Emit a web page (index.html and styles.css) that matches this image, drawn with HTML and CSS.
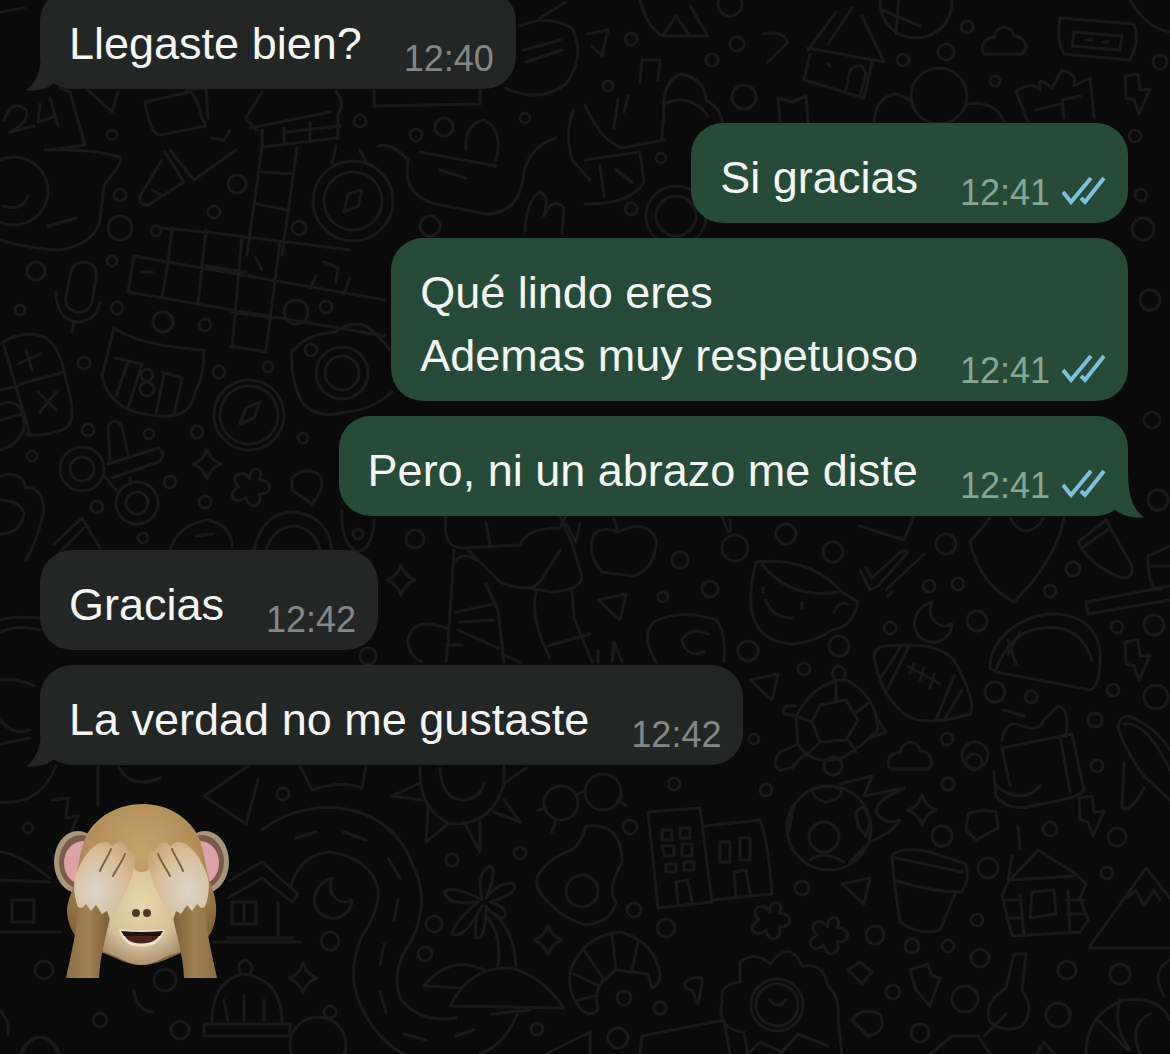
FILE: index.html
```html
<!DOCTYPE html>
<html lang="es">
<head>
  <meta charset="UTF-8">
  <meta name="viewport" content="width=device-width, initial-scale=1.0">
  <title>Chat</title>
  <link rel="stylesheet" href="styles.css">
</head>
<body>
  <!-- wallpaper -->
  <svg class="wallpaper" viewBox="0 0 1170 1054" preserveAspectRatio="xMinYMin slice" aria-hidden="true">
    <defs>
      <path id="star" d="M0-15Q3-4 14 0Q4 3 0 15Q-4 4-14 0Q-4-3 0-15Z"/>
      <path id="bolt" d="M-9-18L4-20L6-4L16-5L5 20L0 6L-8 4Z"/>
      <path id="flower" d="M0-8C-2-22 16-20 9-7C22-8 24 8 9 7C14 20-2 24-4 10C-16 20-24 6-11 0C-22-10-8-20 0-8Z"/>
      <path id="moon" d="M0-20C-22-14-24 16-2 20C10 22 20 12 20 2C8 8-6-2 0-20Z"/>
      <path id="cloud" d="M-20 12C-26 0-14-6-10-4C-8-18 8-18 10-6C20-6 26 6 18 12Z"/>
      <path id="tri" d="M-14-6L14-12L8 14Z"/>
    </defs>

    <!-- top left -->
    <path d="M60 88L70 92L85 145L50 150M4 120Q12 98 26 110Q30 122 10 132L34 126M40 104L38 122L56 116M50 98L58 126M88 90L112 112L118 92M0 12L24 8"/>
    <path d="M145 102L190 92Q196 94 202 118L206 126L160 135Q150 134 145 102ZM186 90L206 88L208 118"/>
    <path d="M0 160A34 34 0 1 1 0 222M4 206Q22 212 28 196M45 150Q90 148 120 157Q124 162 104 185L100 220Q95 244 60 250Q34 250 0 240M48 226L76 218"/>
    <path d="M165 152L184 182L148 205Q138 206 140 196L162 160M170 150L194 180L236 150M212 138L224 140L230 130M152 190L162 196"/>
    <path d="M250 128L330 112M262 92L246 118L256 130M336 92Q346 104 338 114V138L262 147V130M284 128V144M310 122V142M286 132L340 126M262 147L247 255M297 148L282 255M262 172L294 174M256 204L288 210"/>
    <circle cx="353" cy="201" r="40"/><circle cx="353" cy="201" r="29"/>
    <path d="M344 212L348 194L362 190L358 206ZM332 163L336 146M366 162L360 150"/>
    <path d="M378 146Q392 142 408 160Q402 196 436 204L486 214Q520 214 524 172Q530 146 556 138M420 152L496 166M466 150Q464 124 484 120Q504 130 496 160M440 170L466 178M374 90V106L480 104V88"/>
    <path d="M525 232Q526 200 540 192Q550 196 544 216Q552 196 564 208L562 234M574 110Q564 130 572 160L590 180M505 88Q540 104 566 84Q586 56 572 28Q548 14 520 26M524 50L560 40M526 62L562 50M540 18L566 2"/>

    <!-- top right -->
    <path d="M640 0Q648 30 664 36L708 36L690 6M664 34L676 16L690 36M808 50L836 12M828 44L852 8M808 48L884 62L862 16M810 54L804 80L864 98L872 62M846 90L850 70Q862 60 866 74L860 96"/>
    <circle cx="916" cy="2" r="36"/><path d="M900-20L896 34M882 10L920 26M830 66L828 64"/>
    <use href="#cloud" x="1004" y="42"/>
    <path d="M1060 18L1134 24Q1140 40 1130 60L1064 54Q1056 40 1060 18ZM1074 32L1122 36L1120 50L1072 46ZM1086 40H1092M1102 42H1108"/>
    <path d="M588 34L608 30L602 56L592 46M764 34Q782 30 788 42L768 62M640 82L642 60L660 60L658 80M624 112L628 96M614 128L618 100M1130 0Q1146 28 1170 32"/>
    <path d="M664 122Q660 80 682 74Q706 80 706 100Q722 110 722 122M662 140L664 104Q690 92 708 116M585 105Q600 140 622 148L664 140M585 160L640 152L644 182Q630 205 585 204M600 165L604 196M616 170L632 182"/>
    <circle cx="939" cy="96" r="28"/><path d="M874 122Q876 96 896 94Q912 98 914 108M966 104Q996 100 1004 122M780 122L778 98L792 102L806 96L808 122"/>
    <path d="M1028 122L1016 92Q1030 80 1040 90Q1036 74 1052 88L1062 70Q1078 74 1074 86L1090 78L1094 118M1036 110L1060 104M1064 118L1062 100L1080 96"/>
    <use href="#bolt" x="1134" y="94"/>
    <circle cx="676" cy="216" r="30"/><circle cx="676" cy="216" r="20"/>

    <!-- grid of letter tiles and things beside it -->
    <path d="M134 256L385 300M128 292L385 336M134 256L128 292M168 262L162 298M206 230L198 304M242 236L232 348M280 242L266 350M206 232L350 250M172 228L168 262M316 276L310 288M350 278L344 294M162 228L206 232M232 312L272 318M230 346L266 352M206 266L246 272M142 272H152M256 258L262 270M324 262L338 268L336 282"/>
    <path d="M70 276Q72 262 84 262Q98 264 96 278L92 302Q88 314 76 312Q64 308 66 296ZM56 292Q56 318 76 322Q96 322 100 302M74 322L72 332"/>
    <path d="M0 344Q20 330 42 336Q60 344 66 380Q78 420 66 428Q44 438 26 434M4 346L30 434M20 384L64 372M26 350L32 370M18 364L40 354M38 392L56 410M56 392L40 412M0 390L18 386M0 404Q26 396 24 430Q16 446 0 450M0 420L22 414"/>
    <path d="M114 328Q140 346 204 350Q204 376 196 390Q190 420 160 416Q110 414 102 376ZM116 358L142 364L128 408M128 362L116 396M162 372L182 378L174 416M164 374L156 414"/>
    <circle cx="147" cy="375" r="6"/><circle cx="147" cy="389" r="7"/>
    <circle cx="249" cy="415" r="35"/><circle cx="249" cy="415" r="29"/><path d="M240 424L246 408L260 402L254 418Z"/>
    <path d="M294 350Q306 334 336 332Q350 320 366 326Q380 336 390 350M292 350Q290 380 302 402Q316 420 346 412Q372 410 392 392"/>
    <circle cx="342" cy="373" r="26"/><circle cx="342" cy="373" r="17"/><circle cx="311" cy="350" r="6"/>
    <circle cx="82" cy="469" r="22"/><circle cx="82" cy="469" r="12"/><circle cx="137" cy="503" r="21"/><circle cx="137" cy="503" r="11"/>
    <path d="M108 464L158 448Q168 454 158 462L112 478M110 462L108 426Q114 416 122 426L128 456M130 478V484M104 476L116 490"/>
    <use href="#star" x="207" y="464"/><use href="#flower" x="250" y="487"/>
    <path d="M292 478Q304 466 318 474Q328 484 312 504L292 490ZM0 476Q22 470 26 488Q42 486 44 510Q38 540 26 560M0 500Q20 500 24 514Q20 534 0 534M54 544L82 518L100 548M60 552L84 528"/>
    <path d="M170 550Q178 524 208 520Q232 526 232 546M196 536L212 534M254 550Q262 512 294 512Q328 516 332 550M266 550Q274 526 296 526Q316 530 320 550M342 510Q340 544 358 552Q374 546 374 520"/>
    <circle cx="358" cy="534" r="5"/>
    <path d="M0 620Q12 616 40 618M0 632Q20 624 40 630M0 680Q18 678 34 686M0 720Q12 736 30 730M0 744L30 738"/>

    <!-- middle -->
    <use href="#star" x="401" y="580"/>
    <path d="M446 516Q442 546 460 548L520 545Q526 528 560 528L566 516M486 522L490 545M454 550Q450 620 446 662M456 560Q464 552 476 560M468 550L500 582Q530 594 540 582L560 550M560 516L572 544L582 576Q582 590 552 592L530 588M536 592Q530 620 550 658M572 592L574 618L592 662M548 646L590 634M486 584L498 610L504 662M456 612L494 604M458 630L498 648M460 622L494 620M446 628Q412 616 408 640Q408 656 422 662M446 645H462M502 654L520 662"/>
    <path d="M618 532Q604 526 594 534Q586 554 602 572L634 576Q656 568 656 540Q648 518 618 532ZM617 530L614 518M566 524L576 542L580 524"/>
    <use href="#tri" x="612" y="606"/>
    <path d="M722 516Q732 546 730 520M656 662Q640 636 654 622Q680 608 716 620Q726 630 724 662M708 634Q690 626 682 640Q686 658 704 652M598 662V650M612 662L614 642L622 662"/>
    <circle cx="735" cy="548" r="13"/>

    <path d="M756 562Q736 640 792 644Q816 642 832 630Q852 628 858 602L842 592Q810 556 756 562ZM762 564Q790 600 838 592M766 600Q772 618 792 618M834 612Q840 600 848 604"/>
    <path d="M763 587V592M802 602V608"/>
    <path d="M860 526L904 540L914 516M860 570L870 590L878 586L908 552Q904 548 898 554L872 578L866 568M886 590L924 554M888 596L892 592"/>
    <path d="M990 518L970 542Q980 584 1014 602Q1056 560 1064 518M1010 518Q1026 544 1044 518"/>
    <path d="M1078 542L1106 520L1132 566Q1134 578 1122 578Q1090 566 1078 542ZM1082 548L1110 528M1086 602L1170 586M1088 614L1170 600M1086 602L1088 614M1170 546L1148 556Q1148 590 1160 590M1152 566H1170"/>
    <use href="#moon" x="932" y="622"/>
    <path d="M874 656Q876 644 892 646Q950 640 960 672Q976 702 970 714Q924 728 904 714Q880 694 874 656ZM908 648L888 688M900 648L882 676M954 676L936 720M962 690L944 720M908 666L940 684M914 664L910 674M924 668L920 680M934 674L930 688"/>
    <path d="M990 668Q990 642 1018 624Q1050 606 1080 620Q1102 634 1100 660Q1100 686 1090 690Q1050 682 996 672ZM996 670Q1010 630 1044 628Q1080 624 1092 660M1008 640L1016 664M1020 632L1008 654"/>
    <use href="#bolt" x="1134" y="660"/>
    <path d="M820 705L846 700L858 720L846 740L820 742L812 722ZM796 716Q816 680 846 680Q876 694 878 730Q860 748 842 758Q810 766 798 744ZM836 680V700M870 702L854 714M812 722L796 716M820 742L806 756M848 740L856 752M878 720L886 732L870 738M798 744L780 752Q770 766 780 770L792 768L806 752M834 680Q830 668 838 666Q848 668 844 680M796 716L784 714Q780 704 796 706"/>
    <use href="#cloud" x="910" y="757"/><use href="#tri" x="764" y="686"/>
    <path d="M1002 748L1072 734L1084 790Q1080 798 1040 804Q1010 814 996 796L994 772M1002 748L1010 786M1002 740Q1006 718 1022 726Q1040 732 1044 720L1058 706Q1070 708 1066 736M1060 736L1070 792M996 786Q1022 806 1040 786M1004 710L1024 716"/>
    <path d="M1118 728Q1120 712 1134 718Q1158 730 1170 750M1118 728Q1126 752 1144 776L1170 800M1124 724Q1146 720 1170 770M1124 762L1122 808Q1130 814 1144 788"/>

    <!-- bottom left -->
    <path d="M300 766L312 790Q340 780 362 788L366 766M98 766V806M118 766Q130 790 160 778M248 766L204 796L246 824L258 780M0 802Q40 806 56 766M52 800L68 798L66 818L78 816L70 834M0 852Q16 852 50 878M0 880L50 882M12 900H34V922H12ZM0 932H60"/>
    <path d="M230 880L262 862L298 894L292 902L262 878L228 898M278 902V938M232 902H256V924H232ZM244 902V924M228 938H292M214 942H300"/>
    <path d="M262 830Q296 804 340 808Q396 816 414 868Q430 900 412 940Q390 970 400 998Q420 1024 456 1018M290 888Q300 854 330 852Q370 858 378 888Q380 910 362 936Q346 972 360 1004Q376 1040 404 1054M296 838L316 832M344 832L366 840M388 858L400 878M398 900L394 920M384 944L380 964M380 992L386 1012M404 1034L426 1040M456 1036L474 1030M518 1012Q506 1044 480 1054"/>
    <use href="#moon" x="332" y="898"/><use href="#star" x="303" y="978"/>
    <path d="M420 766Q418 810 450 824Q492 826 504 784V766M440 768Q442 800 464 800Q482 798 484 782M418 784L392 796L422 800M428 808L426 842L448 824M464 822L480 852V822M494 812L520 822L504 800M506 782L526 768"/>
    <circle cx="561" cy="803" r="17"/><circle cx="603" cy="792" r="18"/><path d="M578 794L586 790M546 808L538 810M556 820L552 832M618 800L626 806"/>
    <path d="M586 826Q622 822 622 862Q606 890 616 902Q612 922 586 925Q566 920 550 904Q530 886 540 872Q552 856 572 850Q582 842 586 826Z"/><circle cx="582" cy="891" r="16"/>
    <path d="M482 900Q476 872 490 866Q498 870 486 898Q500 880 514 884Q518 894 490 902Q510 908 504 918Q492 916 486 906Q486 940 476 938Q474 916 482 906Q464 940 452 934Q454 922 478 902Q448 906 444 892Q452 884 482 900M494 914Q514 930 516 966M488 918Q502 936 498 966M424 986Q450 954 484 970M424 986L462 988M450 1006Q470 966 510 968Q540 974 564 1008ZM530 1010L492 1014"/>
    <use href="#star" x="548" y="940"/>
    <path d="M578 956Q590 936 620 932Q650 940 658 966Q664 982 652 988L648 974L616 970L602 982Q594 992 598 1010Q586 1020 576 1002Q566 986 572 966ZM612 934L616 970M584 950L604 980M574 974L600 986M638 942L632 970M578 1000L594 996"/>
    <path d="M648 812L700 808L712 902L658 908ZM704 826L760 820Q768 840 772 894L712 900M662 830H672V840H662ZM680 828H690V838H680ZM662 846H674V856H664ZM682 844H692V856H682ZM666 864H676V872H666ZM684 862H694V870H684ZM678 904L676 882L688 880L692 902M720 842H730V862H720ZM740 838H750V860H740ZM736 898L734 872L746 870L750 894"/>
    <path d="M640 1054L642 1036L724 1020L730 1054M546 1054L590 1032V1054M702 982L702 978Q690 976 684 984Q686 990 692 990L698 1004L702 984"/>
    <path d="M212 1022Q212 980 244 974Q282 980 282 1022M204 1024H290V1036H204ZM240 972Q236 962 246 960Q256 966 250 974M224 1000L228 1020M244 996V1020M264 1000V1020M0 1010Q10 1022 8 1034M134 990Q136 1010 152 1012M20 1054Q40 1020 60 1054"/>
    <circle cx="165" cy="980" r="11"/><circle cx="318" cy="1045" r="28"/>

    <!-- bottom right -->
    <circle cx="829" cy="828" r="42"/><circle cx="824" cy="837" r="15"/>
    <path d="M812 790Q826 782 842 790Q840 800 826 802Q814 800 812 790ZM788 834L794 806M856 812L864 806L870 822L866 836L858 826ZM840 784L872 776L864 796L904 788Q876 800 876 812Q884 826 900 820Q896 830 870 842L850 862M810 860Q824 850 844 862"/>
    <use href="#star" x="922" y="810"/>
    <path d="M968 814Q980 808 996 812L998 828L976 840L966 830Z"/><use href="#bolt" x="1088" y="816"/>
    <path d="M892 856Q898 846 930 852L966 864Q970 880 962 892Q930 892 894 880ZM896 858L962 872M894 880L900 922Q920 936 940 930L956 892"/>
    <use href="#tri" x="856" y="890"/><use href="#flower" x="770" y="920"/><use href="#flower" x="828" y="935"/>
    <path d="M1008 882L1038 850L1076 874L1086 884L1080 898L1088 920L1080 932L1012 936L1002 896ZM1010 880L1074 876M1032 892L1054 890L1056 914L1030 918ZM1020 894L1024 936M1004 900H1022M1006 918H1022M1068 890L1070 930M1066 900H1084M1068 914H1086M1012 856L1008 880M1020 850L1018 826"/>
    <path d="M1090 946L1146 868L1170 898M1090 948H1170M1126 898L1136 890L1144 906L1154 890L1160 900"/>
    <circle cx="777" cy="1005" r="26"/><circle cx="777" cy="1005" r="21"/>
    <path d="M740 982V962Q756 950 770 964Q790 938 802 966Q824 962 828 986Q840 996 838 1020L842 1054M740 982Q720 984 722 1000Q716 1030 744 1032L748 1054L760 1042L782 1052L798 1034L828 1046M770 1000Q778 1010 786 1000"/>
    <path d="M910 970L928 964L932 976L940 978L930 1006L916 990ZM1014 954L1026 954L1022 990Q1036 1010 1022 1026Q1006 1034 990 1022Q982 1004 1006 988ZM1006 1014L984 1036M930 1054L952 1036L978 1036L990 1054M848 970L860 962L872 972L862 984ZM852 1020Q862 1006 880 1014Q888 1032 868 1036ZM1086 1054Q1086 1014 1124 1000Q1160 996 1170 1020M1120 1000Q1112 1026 1130 1050M1098 1020L1128 1050M1150 1014Q1128 1024 1140 1054M1036 1054L1044 1042L1054 1054M1170 960Q1150 970 1164 996"/>

    <!-- scattered dots -->
    <g>
      <circle cx="112" cy="135" r="5"/><circle cx="360" cy="121" r="6"/><circle cx="416" cy="135" r="6"/><circle cx="444" cy="127" r="9"/>
      <circle cx="120" cy="195" r="6"/><circle cx="120" cy="228" r="12"/><circle cx="156" cy="231" r="5"/><circle cx="237" cy="184" r="9"/>
      <circle cx="214" cy="212" r="6"/><circle cx="299" cy="228" r="7"/><circle cx="525" cy="118" r="5"/><circle cx="430" cy="226" r="10"/>
      <circle cx="631" cy="39" r="6"/><circle cx="737" cy="44" r="7"/><circle cx="712" cy="60" r="6"/><circle cx="744" cy="97" r="12"/>
      <circle cx="903" cy="60" r="6"/><circle cx="946" cy="52" r="8"/><circle cx="967" cy="27" r="6"/><circle cx="995" cy="81" r="5"/>
      <circle cx="1160" cy="62" r="7"/><circle cx="1135" cy="136" r="6"/><circle cx="1141" cy="195" r="6"/><circle cx="1143" cy="229" r="11"/>
      <circle cx="608" cy="86" r="5"/><circle cx="661" cy="158" r="5"/><circle cx="631" cy="209" r="6"/><circle cx="730" cy="4" r="12"/>
      <circle cx="36" cy="271" r="9"/><circle cx="112" cy="261" r="5"/><circle cx="20" cy="310" r="5"/><circle cx="117" cy="308" r="6"/>
      <circle cx="163" cy="322" r="10"/><circle cx="205" cy="325" r="6"/><circle cx="296" cy="312" r="12"/><circle cx="326" cy="307" r="6"/>
      <circle cx="84" cy="363" r="6"/><circle cx="219" cy="372" r="6"/><circle cx="268" cy="367" r="5"/><circle cx="88" cy="430" r="6"/>
      <circle cx="149" cy="434" r="5"/><circle cx="197" cy="432" r="6"/><circle cx="303" cy="438" r="5"/><circle cx="32" cy="456" r="5"/>
      <circle cx="170" cy="482" r="6"/><circle cx="205" cy="502" r="6"/><circle cx="97" cy="507" r="6"/><circle cx="143" cy="538" r="5"/>
      <circle cx="1150" cy="300" r="10"/><circle cx="1152" cy="420" r="8"/><circle cx="1158" cy="500" r="10"/>
      <circle cx="415" cy="539" r="9"/><circle cx="680" cy="560" r="8"/><circle cx="710" cy="589" r="8"/><circle cx="663" cy="597" r="5"/>
      <circle cx="368" cy="656" r="8"/><circle cx="786" cy="534" r="10"/><circle cx="833" cy="552" r="10"/><circle cx="946" cy="544" r="10"/>
      <circle cx="929" cy="586" r="6"/><circle cx="958" cy="584" r="6"/><circle cx="1073" cy="569" r="7"/><circle cx="1050" cy="591" r="6"/>
      <circle cx="977" cy="621" r="10"/><circle cx="890" cy="628" r="6"/><circle cx="839" cy="646" r="10"/><circle cx="748" cy="651" r="10"/>
      <circle cx="804" cy="669" r="6"/><circle cx="995" cy="692" r="10"/><circle cx="1031" cy="697" r="6"/><circle cx="1113" cy="690" r="6"/>
      <circle cx="1117" cy="627" r="6"/><circle cx="1154" cy="625" r="10"/><circle cx="1156" cy="697" r="12"/><circle cx="1095" cy="720" r="7"/>
      <circle cx="947" cy="739" r="6"/><circle cx="975" cy="755" r="13"/><circle cx="1097" cy="766" r="6"/><circle cx="754" cy="739" r="5"/>
      <circle cx="283" cy="794" r="6"/><circle cx="28" cy="828" r="5"/><circle cx="44" cy="970" r="9"/><circle cx="452" cy="860" r="6"/>
      <circle cx="520" cy="853" r="6"/><circle cx="630" cy="827" r="7"/><circle cx="674" cy="784" r="6"/><circle cx="434" cy="924" r="8"/>
      <circle cx="425" cy="954" r="7"/><circle cx="330" cy="941" r="9"/><circle cx="330" cy="1012" r="6"/><circle cx="634" cy="910" r="7"/>
      <circle cx="666" cy="928" r="9"/><circle cx="624" cy="998" r="7"/><circle cx="660" cy="1008" r="6"/><circle cx="537" cy="1029" r="6"/>
      <circle cx="618" cy="1038" r="10"/><circle cx="766" cy="790" r="6"/><circle cx="948" cy="784" r="6"/><circle cx="942" cy="836" r="10"/>
      <circle cx="988" cy="868" r="10"/><circle cx="1050" cy="829" r="7"/><circle cx="1117" cy="837" r="9"/><circle cx="802" cy="888" r="7"/>
      <circle cx="875" cy="935" r="9"/><circle cx="977" cy="920" r="6"/><circle cx="912" cy="946" r="7"/><circle cx="948" cy="946" r="6"/>
      <circle cx="980" cy="958" r="9"/><circle cx="893" cy="992" r="7"/><circle cx="965" cy="999" r="13"/><circle cx="920" cy="1033" r="9"/>
      <circle cx="1067" cy="970" r="9"/><circle cx="1120" cy="974" r="10"/><circle cx="1058" cy="1015" r="12"/><circle cx="1107" cy="873" r="6"/>
      <circle cx="833" cy="766" r="9"/><circle cx="974" cy="762" r="8"/><circle cx="100" cy="1020" r="7"/><circle cx="180" cy="1030" r="9"/>
    </g>
  </svg>

  <svg class="defs" aria-hidden="true">
    <symbol id="ticks" viewBox="0 0 44 28">
      <path d="M1 15L9 25L29 1M19 21L23 25L42 1"/>
    </symbol>
    <symbol id="tail" viewBox="0 0 40 48">
      <path d="M24 0C24 26 29 40 40 47C27 49 17 45 9 38L0 10Z"/>
    </symbol>
  </svg>

  <main class="chat">
    <section class="group in">
      <article class="bubble">
        <p>Llegaste bien?</p>
        <div class="meta"><time>12:40</time></div>
        <svg class="tail"><use href="#tail"/></svg>
      </article>
    </section>

    <section class="group out">
      <article class="bubble">
        <p>Si gracias</p>
        <div class="meta"><time>12:41</time><svg class="ticks"><use href="#ticks"/></svg></div>
      </article>
      <article class="bubble">
        <p>Qué lindo eres<br>Ademas muy respetuoso</p>
        <div class="meta"><time>12:41</time><svg class="ticks"><use href="#ticks"/></svg></div>
      </article>
      <article class="bubble">
        <p>Pero, ni un abrazo me diste</p>
        <div class="meta"><time>12:41</time><svg class="ticks"><use href="#ticks"/></svg></div>
        <svg class="tail"><use href="#tail"/></svg>
      </article>
    </section>

    <section class="group in">
      <article class="bubble">
        <p>Gracias</p>
        <div class="meta"><time>12:42</time></div>
      </article>
      <article class="bubble">
        <p>La verdad no me gustaste</p>
        <div class="meta"><time>12:42</time></div>
        <svg class="tail"><use href="#tail"/></svg>
      </article>
    </section>

    <!-- see-no-evil monkey -->
    <svg class="emoji" viewBox="0 0 175 174" role="img" aria-label="Mono tapándose los ojos">
      <defs>
        <radialGradient id="fur" cx="50%" cy="30%" r="66%">
          <stop offset="0" stop-color="#c4a36e"/>
          <stop offset=".6" stop-color="#b08c56"/>
          <stop offset="1" stop-color="#856536"/>
        </radialGradient>
        <radialGradient id="muzzle" cx="50%" cy="38%" r="64%">
          <stop offset="0" stop-color="#e8d6a8"/>
          <stop offset=".65" stop-color="#d6c09c"/>
          <stop offset="1" stop-color="#a98d6a"/>
        </radialGradient>
        <radialGradient id="hand" cx="35%" cy="62%" r="75%">
          <stop offset="0" stop-color="#ddd4c8"/>
          <stop offset=".3" stop-color="#dacab4"/>
          <stop offset=".65" stop-color="#d8bd98"/>
          <stop offset="1" stop-color="#c8a67a"/>
        </radialGradient>
        <linearGradient id="arm" x1="0" x2="1">
          <stop offset="0" stop-color="#8d6f46"/>
          <stop offset=".5" stop-color="#a18052"/>
          <stop offset="1" stop-color="#785936"/>
        </linearGradient>
        <g id="ear">
          <ellipse cx="24" cy="58" rx="24" ry="31" fill="#a8967a"/>
          <ellipse cx="27" cy="58" rx="22" ry="27" fill="#7a5a48"/>
          <ellipse cx="29" cy="59" rx="19" ry="22" fill="#dba3a6"/>
        </g>
        <g id="paw">
          <path d="M24 98L58 104C53 130 46 150 45 174H12C17 150 24 124 24 98Z" fill="url(#arm)"/>
          <path d="M24 103C19 90 19 76 23 68C28 54 40 38 50 38C55 38 57 40 58 43C62 36 72 36 73 47C79 46 83 51 81 58C79 76 69 96 56 116L53 107L48 110L42 101L37 107L32 100L28 104Z" fill="url(#hand)"/>
          <path d="M57 45C54 53 49 59 46 67M71 50C68 58 63 64 59 72" fill="none" stroke="#80633f" stroke-width="2" stroke-linecap="round"/>
        </g>
      </defs>
      <use href="#ear"/>
      <use href="#ear" transform="translate(175) scale(-1 1)"/>
      <path d="M89 0C114 0 136 14 145 34C150 46 151 60 155 76C160 88 163 98 162 110C160 132 148 144 130 148C114 154 104 161 87 161C72 161 62 153 46 148C26 144 14 126 13 108C13 94 20 86 23 70C25 56 27 44 33 30C44 12 64 0 89 0Z" fill="url(#fur)"/>
      <path d="M78 62C84 70 92 70 98 62C106 82 116 94 126 108C132 126 132 140 126 148C110 152 100 161 87 161C75 161 64 152 50 148C42 140 44 124 50 110C60 94 70 82 78 62Z" fill="url(#muzzle)"/>
      <ellipse cx="82" cy="109" rx="4" ry="4" fill="#4d3729"/>
      <ellipse cx="93" cy="109" rx="4" ry="4" fill="#4d3729"/>
      <path d="M67 127Q87 129 109 127C105 138 98 141 87 141C76 141 70 137 67 127Z" fill="#4a221e" stroke="#efe0c6" stroke-width="3"/>
      <path d="M67 127Q87 129 109 127L106 132H70Z" fill="#241010"/>
      <use href="#paw"/>
      <use href="#paw" transform="translate(175) scale(-1 1)"/>
    </svg>
  </main>
</body>
</html>
```

FILE: styles.css
```css
* {
  box-sizing: border-box;
}

body {
  margin: 0;
  min-height: 100vh;
  background-color: #0a0a0a;
  font-family: "Liberation Sans", Arial, sans-serif;
  color: #f4f7f5;
  overflow: hidden;
}

.wallpaper {
  position: absolute;
  top: 0;
  left: 0;
  width: 100%;
  height: 100%;
  fill: none;
  stroke: #1a1a1a;
  stroke-width: 3;
  stroke-linejoin: round;
  stroke-linecap: round;
}

.defs {
  position: absolute;
  width: 0;
  height: 0;
}

/* scrolled a little, so the first bubble runs off the top */
.chat {
  position: relative;
  display: flex;
  flex-direction: column;
  gap: 34px;
  margin-top: -11px;
  padding: 0 42px 0 40px;
}

.group {
  display: flex;
  flex-direction: column;
  gap: 15px;
}

.in {
  align-items: flex-start;
}

.out {
  align-items: flex-end;
}

.bubble {
  position: relative;
  display: flex;
  align-items: flex-end;
  gap: 42px;
  padding: 23px 22px 10px 29px;
  border-radius: 32px;
}

.in .bubble {
  background-color: #242626;
}

.out .bubble {
  background-color: #264c39;
}

.bubble p {
  margin: 0 0 4px;
  font-size: 45px;
  line-height: 63px;
}

.meta {
  display: flex;
  align-items: baseline;
  gap: 12px;
  font-size: 36px;
  line-height: 40px;
  color: #858787;
}

.out .meta {
  color: #86a793;
}

.ticks {
  width: 44px;
  height: 28px;
  fill: none;
  stroke: #7cc0dc;
  stroke-width: 4;
}

.tail {
  position: absolute;
  right: -16px;
  bottom: -2px;
  width: 40px;
  height: 48px;
  fill: #264c39;
}

.in .tail {
  right: auto;
  left: -14px;
  fill: #242626;
  transform: scaleX(-1);
}

.emoji {
  width: 175px;
  height: 174px;
  margin: 5px 0 0 14px;
}
```
